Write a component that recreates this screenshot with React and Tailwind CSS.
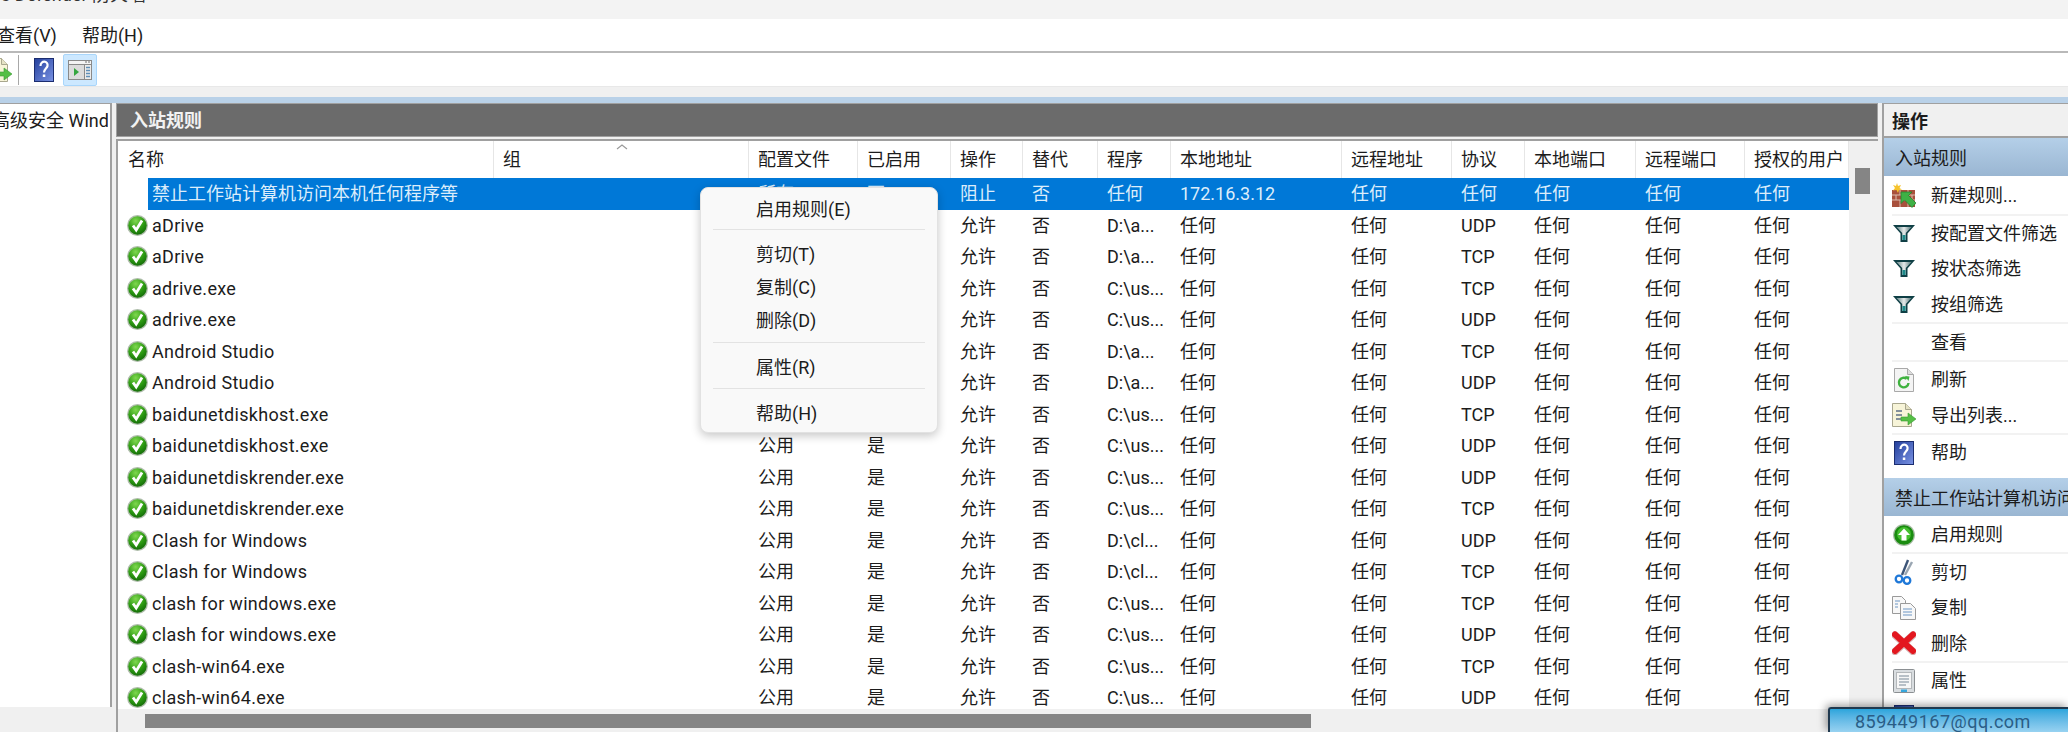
const checkRows = [
  ['aDrive', 'D:\\a...', 'UDP'],
  ['aDrive', 'D:\\a...', 'TCP'],
  ['adrive.exe', 'C:\\us...', 'TCP'],
  ['adrive.exe', 'C:\\us...', 'UDP'],
  ['Android Studio', 'D:\\a...', 'TCP'],
  ['Android Studio', 'D:\\a...', 'UDP'],
  ['baidunetdiskhost.exe', 'C:\\us...', 'TCP'],
  ['baidunetdiskhost.exe', 'C:\\us...', 'UDP'],
  ['baidunetdiskrender.exe', 'C:\\us...', 'UDP'],
  ['baidunetdiskrender.exe', 'C:\\us...', 'TCP'],
  ['Clash for Windows', 'D:\\cl...', 'UDP'],
  ['Clash for Windows', 'D:\\cl...', 'TCP'],
  ['clash for windows.exe', 'C:\\us...', 'TCP'],
  ['clash for windows.exe', 'C:\\us...', 'UDP'],
  ['clash-win64.exe', 'C:\\us...', 'TCP'],
  ['clash-win64.exe', 'C:\\us...', 'UDP'],
];

const headers = ['组', '配置文件', '已启用', '操作', '替代', '程序', '本地地址', '远程地址', '协议', '本地端口', '远程端口', '授权的用户'];
const gridCols = 'grid grid-cols-[376px_255px_109px_93px_72px_75px_73px_171px_110px_73px_111px_109px_104px]';

function CheckIcon() {
  return (
    <svg width="21" height="21" viewBox="0 0 21 21" className="shrink-0">
      <defs>
        <radialGradient id="chk" cx="0.4" cy="0.25" r="0.85">
          <stop offset="0" stopColor="#7fd84f" />
          <stop offset="0.55" stopColor="#2c9a12" />
          <stop offset="1" stopColor="#0f6006" />
        </radialGradient>
      </defs>
      <circle cx="10.5" cy="10.5" r="10.5" fill="#aebdaa" />
      <circle cx="10.5" cy="10.5" r="9.2" fill="url(#chk)" />
      <path d="M6 10.500l3.200 4.500L15 5.500" fill="none" stroke="#fff" strokeWidth="2.800" />
    </svg>
  );
}

function HelpIcon() {
  return (
    <svg width="20" height="24" viewBox="0 0 20 24">
      <defs>
        <linearGradient id="hlp" x1="0" y1="0" x2="1" y2="1">
          <stop offset="0" stopColor="#233f9c" />
          <stop offset="1" stopColor="#7a93e4" />
        </linearGradient>
      </defs>
      <rect x="0.5" y="0.5" width="19" height="23" fill="url(#hlp)" stroke="#1b2d70" />
      <path d="M6.500 8c0-6 8-5.500 7 0-.5 2.500-3.500 3-3.500 6.500" fill="none" stroke="#fff" strokeWidth="2.200" />
      <rect x="8.800" y="16.500" width="2.500" height="2.500" fill="#fff" />
    </svg>
  );
}

function PanelIcon() {
  return (
    <svg width="24" height="20" viewBox="0 0 24 20">
      <rect x="0.5" y="0.5" width="23" height="19" fill="#ececec" stroke="#8a8a8a" />
      <rect x="1" y="1" width="22" height="3" fill="#f4f4f4" />
      <path d="M1 4.500h22" stroke="#8a8a8a" />
      <path d="M17 2h2M20 2h2" stroke="#9a9a9a" strokeWidth="1.500" />
      <rect x="1" y="5" width="15" height="14" fill="#dcdcdc" />
      <path d="M16.500 5v14" stroke="#8a8a8a" />
      <path d="M6 8l5 4-5 4z" fill="#35a63f" />
      <path d="M18 7.500h4M18 10.500h4M18 13.500h4M18 16.500h4" stroke="#5f8fb8" strokeWidth="1.500" />
    </svg>
  );
}

function WallIcon() {
  return (
    <svg width="24" height="26" viewBox="0 0 24 26">
      <rect x="0" y="7" width="23" height="17" fill="#a8503c" />
      <path d="M0 12h23M0 17h23M8 7v5M16 7v5M4 12v5M12 12v5M20 12v5M8 17v7M16 17v7" stroke="#dcbcae" strokeWidth="1" />
      <path d="M9 9h11l-3.500 3.500L24 20l-4 4.500-7.500-7.500L9 20.500z" fill="#3fb045" stroke="#1f7f2c" strokeWidth="0.700" />
      <path d="M5 0l1 3 3-1-1.500 3L10 6.500l-3 .5L6 10 4.500 7 1 7.500 3 5 1 2l3 1z" fill="#f6c32c" />
    </svg>
  );
}

function FunnelIcon() {
  return (
    <svg width="22" height="17" viewBox="0 0 22 17">
      <defs>
        <linearGradient id="fnl" x1="0" y1="0" x2="1" y2="0">
          <stop offset="0.1" stopColor="#7f9a9c" />
          <stop offset="0.5" stopColor="#e6eaea" />
          <stop offset="0.9" stopColor="#6f8c8e" />
        </linearGradient>
      </defs>
      <path d="M0 0H22L14.500 8.500V17H7.500V8.500Z" fill="#0f3f45" />
      <path d="M3.500 2H18.500L12.800 8V15H9.200V8Z" fill="url(#fnl)" />
      <path d="M9.500 10h3v5h-3z" fill="#1d8a8a" />
    </svg>
  );
}

function RefreshIcon() {
  return (
    <svg width="20" height="24" viewBox="0 0 20 24">
      <path d="M0.500 0.500h13l6 6v17H0.500z" fill="#f4f4f4" stroke="#a9a9a9" />
      <path d="M13.500 0.500v6h6" fill="#dcdcdc" stroke="#a9a9a9" />
      <path d="M14.500 15a4.800 4.800 0 1 1-1.800-4.200" fill="none" stroke="#3fb23f" strokeWidth="2.400" />
      <path d="M11 8l4.500 0.500-1 4.500z" fill="#3fb23f" />
    </svg>
  );
}

function ExportIcon() {
  return (
    <svg width="24" height="24" viewBox="0 0 24 24">
      <path d="M0.500 0.500h13l6 6v17H0.500z" fill="#f7f4d8" stroke="#a9a78e" />
      <path d="M13.500 0.500v6h6" fill="#e5e2c4" stroke="#a9a78e" />
      <path d="M4 8h6M4 12h6M4 16h6" stroke="#5e6f86" strokeWidth="1.300" />
      <path d="M9 14h7v-4l8 6-8 6v-4H9z" fill="#55bf45" stroke="#3a9a34" strokeWidth="0.600" />
    </svg>
  );
}

function UpIcon() {
  return (
    <svg width="22" height="22" viewBox="0 0 22 22">
      <circle cx="11" cy="11" r="11" fill="#a9bda6" />
      <circle cx="11" cy="11" r="9.800" fill="#1a8c10" />
      <circle cx="11" cy="10" r="7" fill="#45bf30" />
      <path d="M11 4.500L17 11h-3.500v5.500h-5V11H5z" fill="#fff" />
    </svg>
  );
}

function ScissorsIcon() {
  return (
    <svg width="20" height="26" viewBox="0 0 20 26">
      <path d="M8 16L14 1" stroke="#3d5578" strokeWidth="2.400" />
      <path d="M11 16L18 3" stroke="#9aa6b2" strokeWidth="2.400" />
      <circle cx="5" cy="20" r="3.300" fill="none" stroke="#1f78d8" strokeWidth="2.300" />
      <circle cx="13" cy="21.500" r="3.300" fill="none" stroke="#1f78d8" strokeWidth="2.300" />
    </svg>
  );
}

function CopyIcon() {
  return (
    <svg width="24" height="24" viewBox="0 0 24 24">
      <path d="M0.500 0.500h9l4 4v13H0.500z" fill="#f8f8f8" stroke="#9a9a9a" />
      <path d="M8.500 7.500h10l5 5v11h-15z" fill="#f8f8f8" stroke="#9a9a9a" />
      <path d="M3 5h5M3 8h3M3 11h3M11 13h9M11 16h9M11 19h9" stroke="#6d96c4" strokeWidth="1.200" />
    </svg>
  );
}

function CrossIcon() {
  return (
    <svg width="24" height="24" viewBox="0 0 24 24">
      <path d="M3 4L21 20.500M21 4L3 20.500" stroke="#d8b0b0" strokeWidth="7.500" strokeLinecap="round" />
      <path d="M3 3.500L21 20M21 3.500L3 20" stroke="#e3171f" strokeWidth="6" strokeLinecap="round" />
    </svg>
  );
}

function PropsIcon() {
  return (
    <svg width="22" height="24" viewBox="0 0 22 24">
      <rect x="0.500" y="0.500" width="21" height="23" rx="1" fill="#d9dde0" stroke="#8b8f92" />
      <rect x="3.500" y="3.500" width="15" height="16" fill="#f7f7f7" stroke="#b4b8bb" />
      <path d="M6 7h10M6 10h10M6 13h10M6 16h7" stroke="#7b8a98" strokeWidth="1.100" />
      <rect x="8" y="20.500" width="6" height="2.500" fill="#35a6dc" />
    </svg>
  );
}

function Action({ icon, label }) {
  return (
    <div className="flex h-[35.6px] items-center pl-[8px]">
      <div className="flex w-[39px] justify-center pr-[15px] shrink-0">{icon}</div>
      <span className="whitespace-nowrap">{label}</span>
    </div>
  );
}

function Sep() {
  return <div className="ml-[8px] h-[2px] bg-[#f2f2f2]" />;
}

function ActionSection({ title }) {
  return (
    <div className="flex h-[38px] items-center overflow-hidden whitespace-nowrap bg-gradient-to-b from-[#b4cfe8] to-[#9ab6d2] pl-[11px] pt-[3px]">
      {title}
    </div>
  );
}

function Row({ icon, name, cells, selected }) {
  const cellClass = selected
    ? 'flex items-center pl-[9px] bg-[#0078d7] text-[#dcedfb] whitespace-nowrap'
    : 'flex items-center pl-[9px] whitespace-nowrap';
  return (
    <div className={gridCols + ' h-[31.5px]'}>
      <div className="flex items-center pl-[9px]">
        <div className="w-[21px] shrink-0">{icon && <CheckIcon />}</div>
        <div className={selected ? 'flex h-full flex-1 items-center pl-[4px] bg-[#0078d7] text-[#dcedfb]' : 'flex h-full flex-1 items-center pl-[4px] tracking-[0.3px]'}>
          {name}
        </div>
      </div>
      {cells.map((text, i) => (
        <div key={i} className={cellClass}>{text}</div>
      ))}
    </div>
  );
}

export default function App() {
  return (
    <div className="relative h-[732px] w-[2068px] overflow-hidden bg-[#f0f0f0] font-['Roboto','Noto_Sans_CJK_SC',sans-serif] text-[18px] text-[#1c1c1c]">
      {/* Title bar, cut off by the top of the picture */}
      <div className="h-[19px] overflow-hidden bg-[#f3f3f3]">
        <div className="mt-[-19px] flex w-[146px] justify-end overflow-hidden whitespace-nowrap text-[#333]">
          高级安全 Windows Defender 防火墙
        </div>
      </div>

      {/* Menu */}
      <div className="flex h-[34px] items-center gap-[25px] overflow-hidden border-b-2 border-[#b9b9b9] bg-white">
        <span className="ml-[-3px]">查看(V)</span>
        <span>帮助(H)</span>
      </div>

      {/* Toolbar */}
      <div className="flex h-[34px] items-center border-b border-[#e8e8e8] bg-white">
        <div className="ml-[-12px] flex w-[30px] shrink-0 items-center">
          <ExportIcon />
        </div>
        <div className="h-[30px] w-px bg-[#a8a8a8]" />
        <div className="ml-[15px] flex items-center">
          <HelpIcon />
        </div>
        <div className="ml-[9px] flex h-[32px] w-[34px] items-center justify-center rounded-[2px] border border-[#a9d6fb] bg-[#cce8ff]">
          <PanelIcon />
        </div>
      </div>

      <div className="h-[10px] bg-[#f0f0f0]" />
      <div className="h-[6px] bg-[#b9d1e8]" />

      <div className="flex h-[629px]">
        {/* Tree */}
        <div className="flex w-[112px] shrink-0 flex-col">
          <div className="h-[604px] overflow-hidden border-r-2 border-t border-[#a0a0a0] bg-white">
            <div className="ml-[-8px] mt-[3px] w-[116px] overflow-hidden whitespace-nowrap">高级安全 Windows</div>
          </div>
        </div>

        {/* Rules list */}
        <div className="ml-[4px] flex w-[1762px] shrink-0 flex-col">
          <div className="flex h-[34px] shrink-0 items-center border border-[#a0a0a0] bg-[#6b6b6b] pl-[13px] font-bold text-[#f2f2f2]">
            入站规则
          </div>
          <div className="mt-[2px] flex flex-1 flex-col overflow-hidden border-l-2 border-t-2 border-[#a0a0a0]">
            <div className="flex h-[568px] shrink-0 bg-white">
              <div className="w-[1731px] overflow-hidden">
                <div className={gridCols + ' relative h-[37px]'}>
                  <div className="flex items-center border-r border-[#e6e6e6] pl-[10px]">名称</div>
                  {headers.map((h) => (
                    <div key={h} className="flex items-center whitespace-nowrap border-r border-[#e6e6e6] pl-[9px]">{h}</div>
                  ))}
                  <svg width="12" height="7" viewBox="0 0 12 7" className="absolute left-[498px] top-[2px]">
                    <path d="M1 6l5-4 5 4" fill="none" stroke="#9a9a9a" strokeWidth="1.200" />
                  </svg>
                </div>
                <Row
                  name="禁止工作站计算机访问本机任何程序等"
                  cells={['', '所有', '否', '阻止', '否', '任何', '172.16.3.12', '任何', '任何', '任何', '任何', '任何']}
                  selected
                />
                {checkRows.map(([name, program, protocol], i) => (
                  <Row
                    key={i}
                    icon
                    name={name}
                    cells={['', '公用', '是', '允许', '否', program, '任何', '任何', protocol, '任何', '任何', '任何']}
                  />
                ))}
              </div>
              {/* Vertical scrollbar */}
              <div className="w-[29px] shrink-0 bg-[#f0f0f0] pl-[6px] pt-[27px]">
                <div className="h-[26px] w-[15px] bg-[#858585]" />
              </div>
            </div>
            {/* Horizontal scrollbar */}
            <div className="flex h-[24px] shrink-0 items-center bg-[#f0f0f0] pl-[27px]">
              <div className="h-[14px] w-[1166px] bg-[#858585]" />
            </div>
          </div>
        </div>

        {/* Actions */}
        <div className="ml-[4px] flex-1 overflow-hidden border-l-2 border-t border-[#a0a0a0] bg-white">
          <div className="flex h-[34px] items-center border-b-2 border-[#a0a0a0] bg-[#f0f0f0] pl-[8px] pt-[3px] font-bold">操作</div>
          <ActionSection title="入站规则" />
          <div className="h-[2px]" />
          <Action icon={<WallIcon />} label="新建规则..." />
          <Sep />
          <Action icon={<FunnelIcon />} label="按配置文件筛选" />
          <Action icon={<FunnelIcon />} label="按状态筛选" />
          <Action icon={<FunnelIcon />} label="按组筛选" />
          <Sep />
          <Action label="查看" />
          <Sep />
          <Action icon={<RefreshIcon />} label="刷新" />
          <Action icon={<ExportIcon />} label="导出列表..." />
          <Sep />
          <Action icon={<HelpIcon />} label="帮助" />
          <div className="h-[7px]" />
          <ActionSection title="禁止工作站计算机访问本机任何程序等" />
          <div className="h-px" />
          <Action icon={<UpIcon />} label="启用规则" />
          <Sep />
          <Action icon={<ScissorsIcon />} label="剪切" />
          <Action icon={<CopyIcon />} label="复制" />
          <Action icon={<CrossIcon />} label="删除" />
          <Sep />
          <Action icon={<PropsIcon />} label="属性" />
          <Action icon={<HelpIcon />} label="帮助" />
        </div>
      </div>

      {/* Context menu */}
      <div className="absolute left-[700px] top-[187px] flex h-[246px] w-[238px] flex-col rounded-[8px] border border-[#e2e2e2] bg-[#f9f9f9] px-[12px] pt-[5px] shadow-[0_3px_10px_rgba(0,0,0,0.22)]">
        <div className="flex h-[33px] shrink-0 items-center pl-[43px]">启用规则(E)</div>
        <div className="mb-[8px] mt-[3px] h-px shrink-0 bg-[#e3e3e3]" />
        <div className="flex h-[33px] shrink-0 items-center pl-[43px]">剪切(T)</div>
        <div className="flex h-[33px] shrink-0 items-center pl-[43px]">复制(C)</div>
        <div className="flex h-[33px] shrink-0 items-center pl-[43px]">删除(D)</div>
        <div className="mb-[8px] mt-[5px] h-px shrink-0 bg-[#e3e3e3]" />
        <div className="flex h-[33px] shrink-0 items-center pl-[43px]">属性(R)</div>
        <div className="mb-[8px] mt-[4px] h-px shrink-0 bg-[#e3e3e3]" />
        <div className="flex h-[33px] shrink-0 items-center pl-[43px]">帮助(H)</div>
      </div>

      {/* Account badge in the corner */}
      <div className="absolute bottom-0 right-0 h-[25px] w-[240px] overflow-hidden rounded-tl-[3px] border-l-2 border-t-2 border-[#20394f] bg-gradient-to-b from-[#29a5dc] to-[#97d2f1] pl-[25px] text-[18px] leading-[25px] tracking-[0.5px] text-[#2a5d86] shadow-[-2px_-2px_8px_rgba(0,0,0,0.4)]">
        859449167@qq.com
      </div>
    </div>
  );
}
